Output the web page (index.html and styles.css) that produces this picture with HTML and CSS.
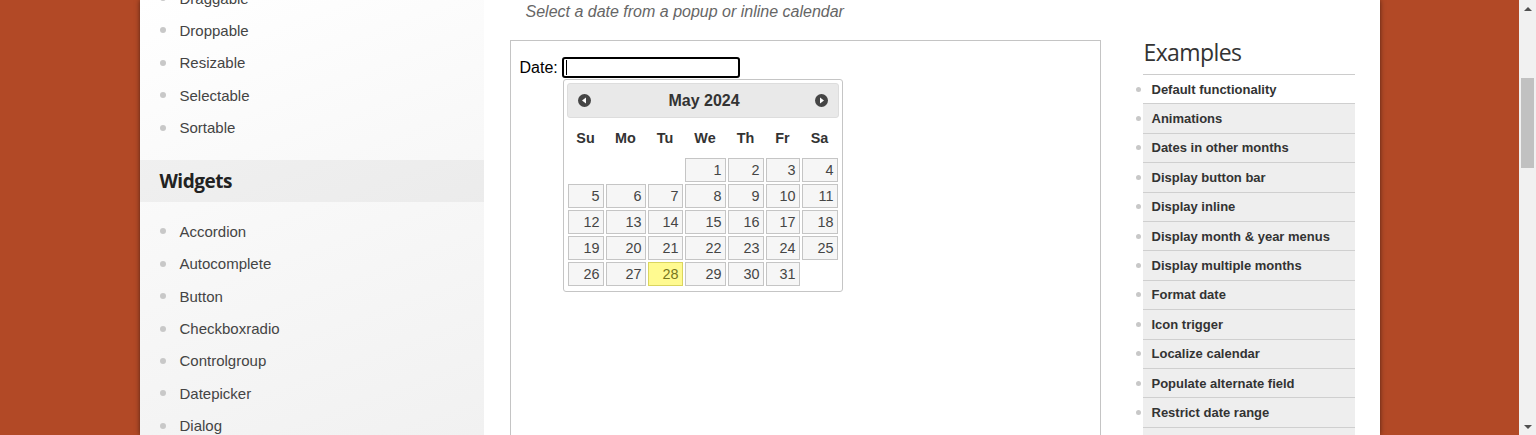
FILE: index.html
```html
<!DOCTYPE html>
<html lang="en">
<head>
<meta charset="utf-8">
<title>Datepicker | jQuery UI</title>
<link rel="stylesheet" href="styles.css">
</head>
<body>
<div class="viewport">
  <div class="page">
    <div class="container">
      <nav class="sidebar">
        <ul class="nav-list first">
          <li>Draggable</li>
          <li>Droppable</li>
          <li>Resizable</li>
          <li>Selectable</li>
          <li>Sortable</li>
        </ul>
        <h3 class="nav-head">Widgets</h3>
        <ul class="nav-list second">
          <li>Accordion</li>
          <li>Autocomplete</li>
          <li>Button</li>
          <li>Checkboxradio</li>
          <li>Controlgroup</li>
          <li>Datepicker</li>
          <li>Dialog</li>
        </ul>
      </nav>
      <main class="main">
        <p class="subtitle">Select a date from a popup or inline calendar</p>
        <div class="content-row">
          <div class="demo">
            <div class="date-row">
              <span class="date-label">Date:</span>
              <div class="date-input"><span class="caret"></span></div>
            </div>
            <div class="datepicker">
              <div class="dp-header">
                <svg class="dp-nav" width="13" height="13" viewBox="0 0 13 13"><circle cx="6.5" cy="6.5" r="6.5" fill="#454545"/><polygon points="4,6.5 8,3.5 8,9.5" fill="#fff"/></svg>
                <span class="dp-title">May 2024</span>
                <svg class="dp-nav" width="13" height="13" viewBox="0 0 13 13"><circle cx="6.5" cy="6.5" r="6.5" fill="#454545"/><polygon points="9,6.5 5,3.5 5,9.5" fill="#fff"/></svg>
              </div>
              <table class="dp-table">
                <thead>
                  <tr><th>Su</th><th>Mo</th><th>Tu</th><th>We</th><th>Th</th><th>Fr</th><th>Sa</th></tr>
                </thead>
                <tbody>
                  <tr><td></td><td></td><td></td><td><a>1</a></td><td><a>2</a></td><td><a>3</a></td><td><a>4</a></td></tr>
                  <tr><td><a>5</a></td><td><a>6</a></td><td><a>7</a></td><td><a>8</a></td><td><a>9</a></td><td><a>10</a></td><td><a>11</a></td></tr>
                  <tr><td><a>12</a></td><td><a>13</a></td><td><a>14</a></td><td><a>15</a></td><td><a>16</a></td><td><a>17</a></td><td><a>18</a></td></tr>
                  <tr><td><a>19</a></td><td><a>20</a></td><td><a>21</a></td><td><a>22</a></td><td><a>23</a></td><td><a>24</a></td><td><a>25</a></td></tr>
                  <tr><td><a>26</a></td><td><a>27</a></td><td><a class="today">28</a></td><td><a>29</a></td><td><a>30</a></td><td><a>31</a></td><td></td></tr>
                </tbody>
              </table>
            </div>
          </div>
          <aside class="examples">
            <h2 class="examples-title">Examples</h2>
            <ul class="examples-list">
              <li class="active">Default functionality</li>
              <li>Animations</li>
              <li>Dates in other months</li>
              <li>Display button bar</li>
              <li>Display inline</li>
              <li>Display month &amp; year menus</li>
              <li>Display multiple months</li>
              <li>Format date</li>
              <li>Icon trigger</li>
              <li>Localize calendar</li>
              <li>Populate alternate field</li>
              <li>Restrict date range</li>
              <li>Select a Date Range</li>
            </ul>
          </aside>
        </div>
      </main>
    </div>
  </div>
  <div class="scrollbar">
    <div class="sb-btn"><span class="sb-up"></span></div>
    <div class="sb-track"><div class="sb-thumb"></div></div>
    <div class="sb-btn"><span class="sb-down"></span></div>
  </div>
</div>
</body>
</html>
```

FILE: styles.css
```css
* { box-sizing: border-box; }
html, body { margin: 0; padding: 0; height: 435px; overflow: hidden; }
body { font-family: "Liberation Sans", Arial, sans-serif; color: #333; }

.viewport { display: flex; height: 435px; }
.page { flex: 1; background: #b24926; display: flex; justify-content: center; overflow: hidden; }
.container { width: 1240px; height: 435px; display: flex; background: #fff; box-shadow: 0 0 5px rgba(0,0,0,0.55); overflow: hidden; }

/* left sidebar */
.sidebar { width: 344px; flex: none; background: linear-gradient(160deg, #ffffff 0%, #f9f9f9 40%, #f1f1f1 100%); }
.nav-list { list-style: none; margin: 0; padding: 0 0 0 20px; }
.nav-list.first { margin-top: -18.2px; }
.nav-list.second { margin-top: 12.6px; }
.nav-list li { display: flex; align-items: center; height: 32.45px; font-size: 15px; color: #444; }
.nav-list li::before { content: ""; width: 6px; height: 6px; border-radius: 50%; background: #c8c8c8; margin-right: 14px; flex: none; }
.nav-head { margin: 16.4px 0 0; height: 42px; display: flex; align-items: center; padding-left: 20px; background: rgba(0,0,0,0.045); font-family: "Open Sans", sans-serif; font-weight: 700; font-size: 19px; letter-spacing: -0.5px; color: #222; }

/* main */
.main { flex: 1; background: #fff; }
.subtitle { margin: 0; padding-left: 42px; line-height: 24px; font-size: 16px; font-style: italic; color: #666; }
.content-row { display: flex; align-items: flex-start; margin-top: 16px; padding-left: 26px; }

.demo { position: relative; width: 591px; height: 420px; border: 1px solid #c4c4c4; padding: 17px 9px 0 9px; flex: none; }
.date-row { display: flex; align-items: center; gap: 4px; }
.date-label { font-size: 16px; color: #000; }
.date-input { width: 178px; height: 21px; border: 2px solid #000; border-radius: 3px; background: #fff; display: flex; align-items: center; padding-left: 2px; margin-top: -1px; }
.caret { width: 1px; height: 15px; background: #000; }

.datepicker { position: absolute; left: 52px; top: 38px; width: 280px; padding: 3px; border: 1px solid #c5c5c5; border-radius: 3px; background: #fff; }
.dp-header { height: 35px; border: 1px solid #dddddd; border-radius: 3px; background: #e9e9e9; display: flex; align-items: center; justify-content: space-between; padding: 0 9px 0 10px; }
.dp-title { font-weight: 700; font-size: 16px; color: #333; margin-left: 2px; }
.dp-nav { display: block; }

.dp-table { width: 100%; table-layout: fixed; border-collapse: collapse; font-size: 14.4px; margin: 0 0 1px; }
.dp-table th { padding: 12px 0 10px; font-weight: 700; line-height: 17px; color: #333; text-align: center; }
.dp-table th:nth-child(1) { width: 38px; }
.dp-table th:nth-child(2) { width: 42px; }
.dp-table th:nth-child(3) { width: 37px; }
.dp-table th:nth-child(4) { width: 43px; }
.dp-table th:nth-child(5) { width: 38px; }
.dp-table th:nth-child(6) { width: 36px; }
.dp-table th:nth-child(7) { width: 38px; }
.dp-table td { padding: 1px; }
.dp-table td a { display: block; line-height: 16px; padding: 3px 3px; text-align: right; border: 1px solid #c5c5c5; background: #f6f6f6; color: #454545; }
.dp-table td a.today { background: #fffa90; border-color: #dad55e; color: #777620; }

/* examples */
.examples { width: 212px; margin-left: 42px; flex: none; }
.examples-title { margin: 0; font-family: "Open Sans", sans-serif; font-weight: 400; font-size: 23px; letter-spacing: -0.6px; line-height: 24px; padding: 0 0 10px 1px; color: #333; border-bottom: 1px solid #cccccc; }
.examples-list { list-style: none; margin: 0; padding: 0; }
.examples-list li { display: flex; align-items: center; height: 29.4px; border-bottom: 1px solid #cfcfcf; background: #eeeeee; font-size: 13px; font-weight: 700; color: #333; }
.examples-list li.active { background: #fff; }
.examples-list li::before { content: ""; width: 5px; height: 5px; border-radius: 50%; background: #c8c8c8; margin-left: -7px; margin-right: 11px; flex: none; }

/* fake scrollbar */
.scrollbar { width: 17px; flex: none; background: #f1f1f1; display: flex; flex-direction: column; }
.sb-btn { height: 17px; display: flex; align-items: center; justify-content: center; flex: none; }
.sb-up { width: 0; height: 0; border-left: 4px solid transparent; border-right: 4px solid transparent; border-bottom: 4px solid #505050; }
.sb-down { width: 0; height: 0; border-left: 4px solid transparent; border-right: 4px solid transparent; border-top: 4px solid #505050; }
.sb-track { flex: 1; padding: 61px 2px 0; }
.sb-thumb { height: 90px; background: #c1c1c1; }
```
